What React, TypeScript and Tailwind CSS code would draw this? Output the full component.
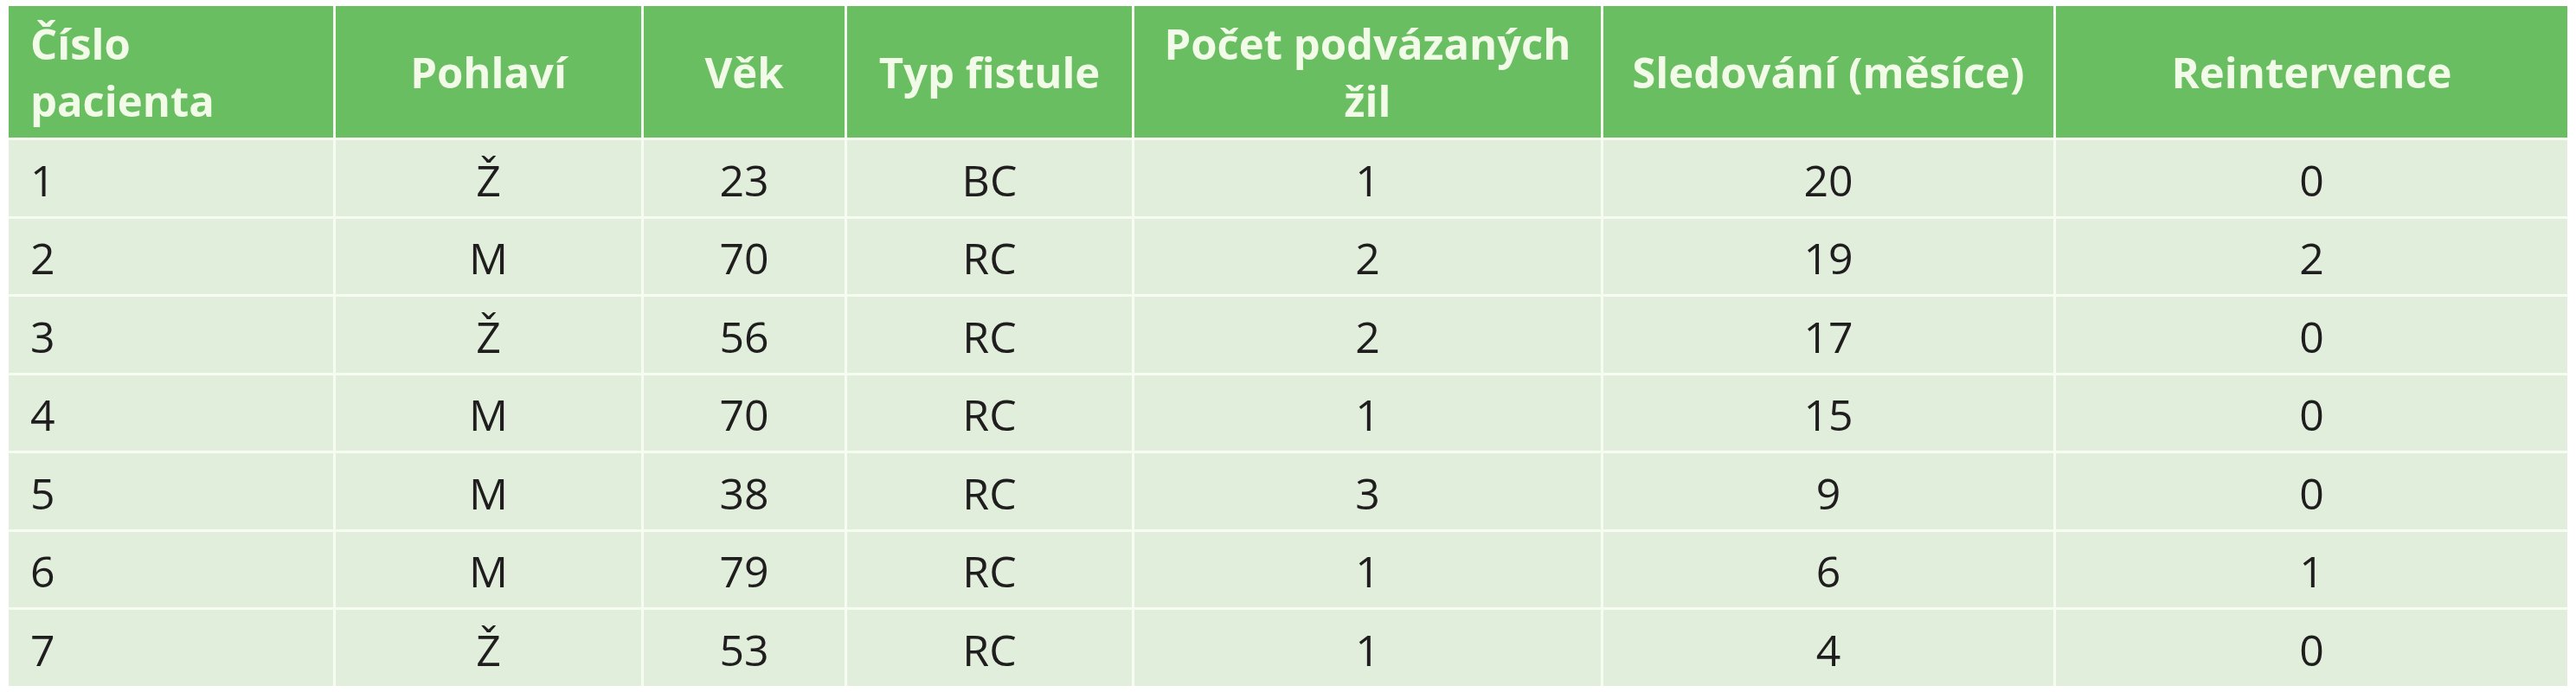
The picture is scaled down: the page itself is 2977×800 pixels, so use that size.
import React from "react";

// Patient table: green header row, light green body rows, thin white rules.
const HEADERS: React.ReactNode[] = [
  <>Číslo<br />pacienta</>,
  "Pohlaví",
  "Věk",
  "Typ fistule",
  <>Počet podvázaných<br />žil</>,
  "Sledování (měsíce)",
  "Reintervence",
];

const ROWS: (string | number)[][] = [
  [1, "Ž", 23, "BC", 1, 20, 0],
  [2, "M", 70, "RC", 2, 19, 2],
  [3, "Ž", 56, "RC", 2, 17, 0],
  [4, "M", 70, "RC", 1, 15, 0],
  [5, "M", 38, "RC", 3, 9, 0],
  [6, "M", 79, "RC", 1, 6, 1],
  [7, "Ž", 53, "RC", 1, 4, 0],
];

export default function App() {
  return (
    <div className="min-h-screen bg-white pl-[10px] pt-[7px] font-['Open_Sans','Noto_Sans',sans-serif]">
      <div className="grid w-fit grid-cols-[375px_353px_232px_329px_539px_520px_591px] grid-rows-[152px_repeat(7,87.5px)] gap-[3px] bg-[#f6fcf1]">
        {HEADERS.map((h, i) => (
          <div
            key={i}
            className={`flex items-center bg-[#68be60] text-[49px] font-bold leading-[66px] text-[#f2fae8] ${
              i === 0 ? "justify-start pl-[25px] text-left" : "justify-center text-center"
            }`}
          >
            <span>{h}</span>
          </div>
        ))}
        {ROWS.map((row, r) =>
          row.map((cell, c) => (
            <div
              key={`${r}-${c}`}
              className={`flex items-center bg-[#e1eedb] pt-[4px] text-[50px] leading-none text-[#1f1d1e] ${
                c === 0 ? "justify-start pl-[25px]" : "justify-center"
              }`}
            >
              {cell}
            </div>
          ))
        )}
      </div>
    </div>
  );
}
